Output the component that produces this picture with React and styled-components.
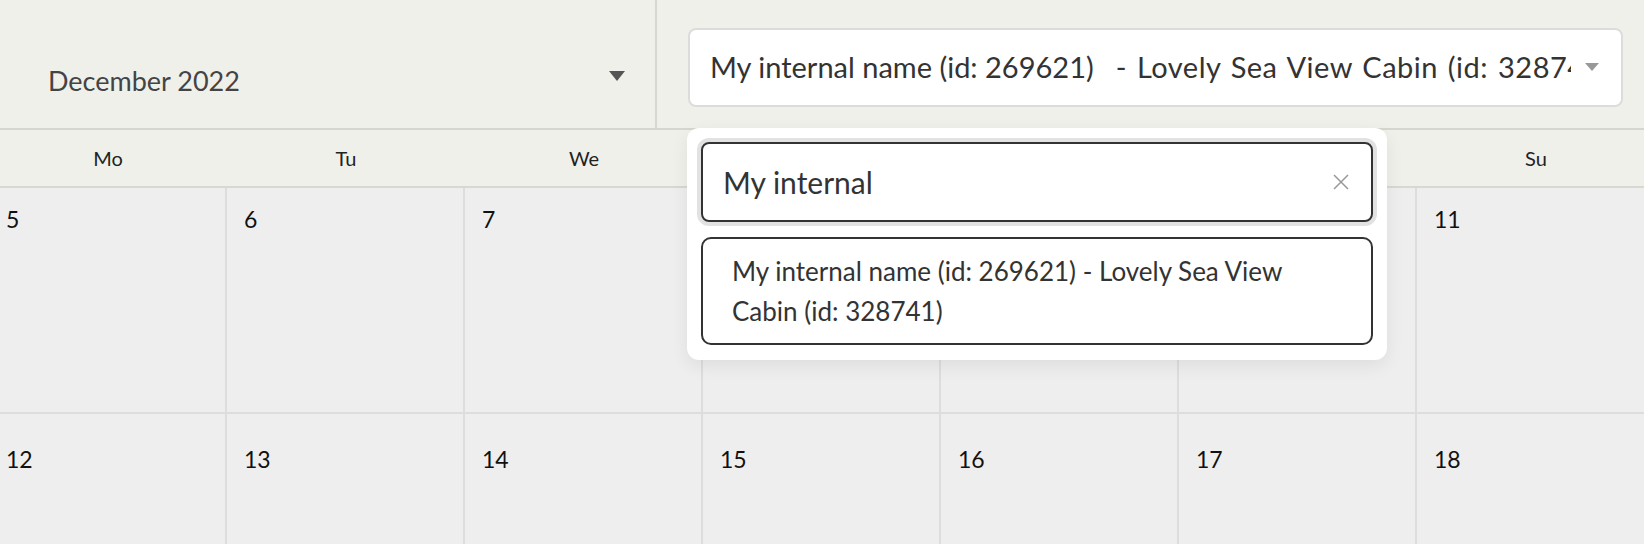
import React from 'react';
import styled, { createGlobalStyle } from 'styled-components';

const GlobalStyle = createGlobalStyle`
  html, body { margin: 0; padding: 0; }
  body {
    width: 1644px;
    height: 544px;
    overflow: hidden;
    background: #eeeeee;
    font-family: Lato, "Noto Sans", sans-serif;
  }
  * { box-sizing: border-box; }
`;

const Page = styled.div`
  position: relative;
  width: 1644px;
  height: 544px;
  overflow: hidden;
`;

const Header = styled.header`
  display: flex;
  height: 130px;
  background: #f0f0eb;
  border-bottom: 2px solid #d6d6ce;
`;

const MonthPanel = styled.div`
  flex: 0 0 657px;
  border-right: 2px solid #d8d8d0;
  display: flex;
  align-items: center;
  padding: 32px 30px 0 48px;
`;

const MonthSelect = styled.div`
  flex: 1;
  display: flex;
  align-items: center;
  justify-content: space-between;
  font-size: 27px;
  color: #444;
`;

const Caret = styled.span`
  width: 0;
  height: 0;
  border-left: ${p => p.$w / 2}px solid transparent;
  border-right: ${p => p.$w / 2}px solid transparent;
  border-top: ${p => p.$h}px solid ${p => p.$color};
  margin-bottom: ${p => p.$lift || 0}px;
  flex-shrink: 0;
`;

const PropertyPanel = styled.div`
  flex: 1;
  min-width: 0;
  padding: 28px 21px 0 31px;
`;

const PropertyBox = styled.div`
  height: 79px;
  background: #ffffff;
  border: 2px solid #dcdcdc;
  border-radius: 8px;
  display: flex;
  align-items: center;
  padding: 0 22px 2px 20px;
`;

const PropertyText = styled.div`
  flex: 1;
  min-width: 0;
  overflow: hidden;
  white-space: nowrap;
  font-size: 29px;
  color: #333;
  margin-right: 14px;
`;

const InternalName = styled.span``;

const ListingName = styled.span`
  margin-left: 22px;
  letter-spacing: 0.5px;
  word-spacing: 2px;
`;

const Calendar = styled.div`
  margin-left: -11px;
  width: 1666px;
`;

const WeekdayRow = styled.div`
  position: relative;
  z-index: 1;
  display: grid;
  grid-template-columns: repeat(7, 238px);
  height: 58px;
  background: #f0f0eb;
  border-bottom: 2px solid #d8d8d2;
`;

const Weekday = styled.div`
  display: flex;
  align-items: center;
  justify-content: center;
  font-size: 20px;
  color: #222;
`;

const DaysGrid = styled.div`
  margin-top: -14px;
  display: grid;
  grid-template-columns: repeat(7, 238px);
  grid-auto-rows: 240px;
`;

const DayCell = styled.div`
  background: #eeeeee;
  border-right: 2px solid #dddddd;
  border-bottom: 2px solid #dddddd;
  padding: 31px 0 0 17px;
  font-size: 23px;
  color: #111;
`;

const Popup = styled.div`
  position: absolute;
  z-index: 2;
  left: 687px;
  top: 128px;
  width: 700px;
  background: #ffffff;
  border-radius: 12px;
  padding: 14px 14px 15px;
  box-shadow: 0 6px 18px rgba(0, 0, 0, 0.07);
`;

const SearchField = styled.div`
  height: 80px;
  border: 2px solid #333;
  border-radius: 8px;
  box-shadow: 0 0 0 4px #e2e2e2;
  display: flex;
  align-items: center;
  padding: 0 22px 0 20px;
`;

const SearchInput = styled.input`
  flex: 1;
  min-width: 0;
  border: none;
  outline: none;
  background: transparent;
  font-family: inherit;
  font-size: 30px;
  color: #333;
  padding: 0;
`;

const ClearIcon = styled.svg`
  width: 16px;
  height: 16px;
  flex-shrink: 0;
`;

const Option = styled.div`
  margin-top: 15px;
  border: 2px solid #333;
  border-radius: 10px;
  padding: 12px 60px 12px 29px;
  font-size: 26px;
  line-height: 40px;
  color: #333;
`;

const weekdays = ['Mo', 'Tu', 'We', 'Th', 'Fr', 'Sa', 'Su'];
const days = [5, 6, 7, 8, 9, 10, 11, 12, 13, 14, 15, 16, 17, 18];

export default function App() {
  return (
    <Page>
      <GlobalStyle />
      <Header>
        <MonthPanel>
          <MonthSelect>
            <span>December 2022</span>
            <Caret $w={16} $h={10} $color="#555" $lift={9} />
          </MonthSelect>
        </MonthPanel>
        <PropertyPanel>
          <PropertyBox>
            <PropertyText>
              <InternalName>My internal name (id: 269621)</InternalName>
              <ListingName>- Lovely Sea View Cabin (id: 328741)</ListingName>
            </PropertyText>
            <Caret $w={15} $h={8} $color="#999" />
          </PropertyBox>
        </PropertyPanel>
      </Header>
      <Calendar>
        <WeekdayRow>
          {weekdays.map(d => (
            <Weekday key={d}>{d}</Weekday>
          ))}
        </WeekdayRow>
        <DaysGrid>
          {days.map(d => (
            <DayCell key={d}>{d}</DayCell>
          ))}
        </DaysGrid>
      </Calendar>
      <Popup>
        <SearchField>
          <SearchInput defaultValue="My internal" />
          <ClearIcon viewBox="0 0 16 16">
            <path d="M1 1 L15 15 M15 1 L1 15" stroke="#999" strokeWidth="1.5" fill="none" />
          </ClearIcon>
        </SearchField>
        <Option>My internal name (id: 269621) - Lovely Sea View Cabin (id: 328741)</Option>
      </Popup>
    </Page>
  );
}
